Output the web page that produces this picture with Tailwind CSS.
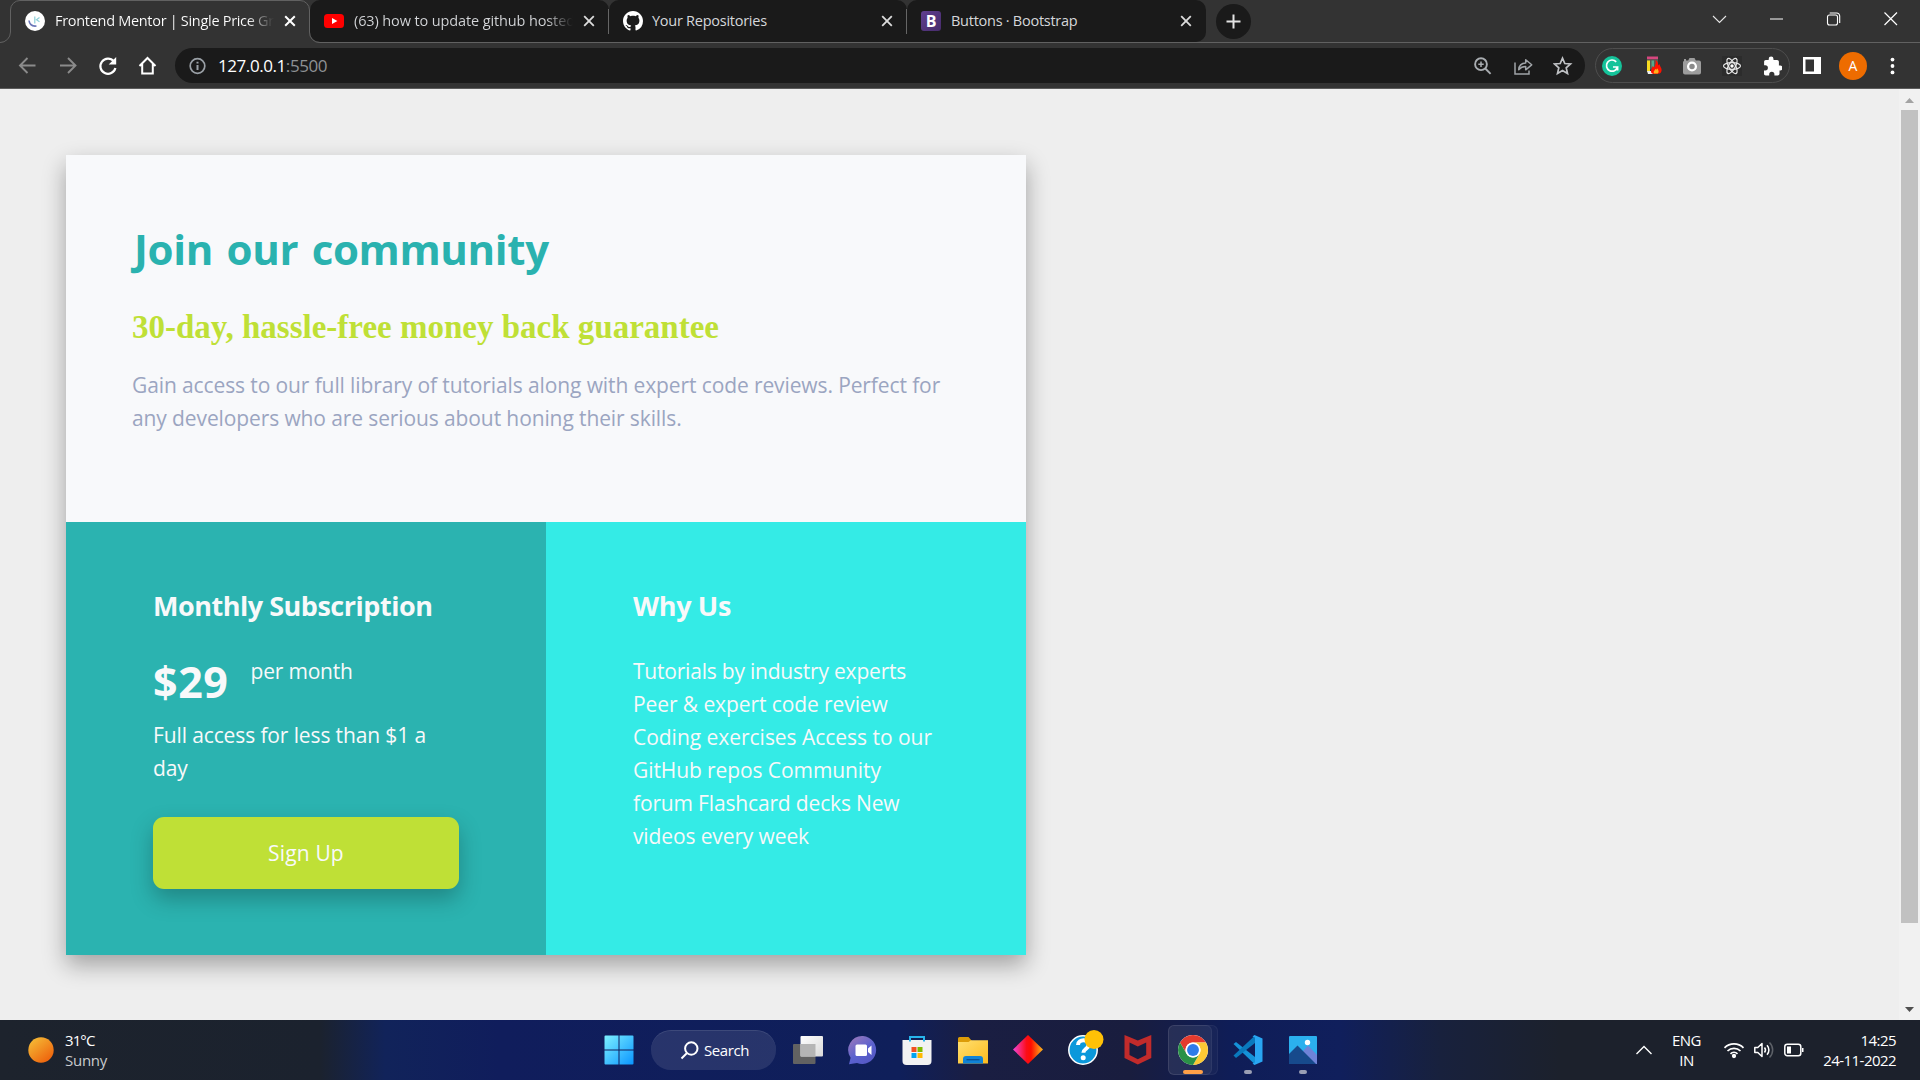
<!DOCTYPE html>
<html lang="en">
<head>
<meta charset="utf-8">
<title>Frontend Mentor | Single Price Grid Component</title>
<script src="https://cdn.jsdelivr.net/npm/@tailwindcss/browser@4"></script>
</head>
<body class="flex h-[1080px] w-[1920px] flex-col overflow-hidden bg-[#eeeeee] font-['Open_Sans',sans-serif]">

<!-- Tab strip -->
<header class="relative flex h-[43px] shrink-0 border-b border-[#616161] bg-[#333333] text-[14.5px] tracking-[-0.26px] text-[#d5d7da]">
  <div class="w-[310px] shrink-0"></div>
  <div class="flex h-[42px] w-[299px] shrink-0 items-center rounded-t-[10px] rounded-bl-[10px] bg-[#1a1a1a] pl-[14px]">
    <svg class="h-5 w-5 shrink-0" viewBox="0 0 20 20"><rect y="3" width="20" height="14" rx="3.5" fill="#f00"/><path d="M8 7l5.400 3L8 13z" fill="#fff"/></svg>
    <div class="ml-[10px] w-[219px] shrink-0 overflow-hidden whitespace-nowrap bg-linear-to-r from-[#d5d7da] from-88% to-[#1a1a1a] bg-clip-text tracking-[-0.12px] text-transparent">(63) how to update github hosted</div>
    <svg class="ml-[6px] h-5 w-5 shrink-0" viewBox="0 0 20 20" stroke="#dcdcdc" stroke-width="1.800"><path d="M5.200 5.200l9.600 9.600M14.800 5.200l-9.600 9.600"/></svg>
  </div>
  <div class="flex h-[42px] w-[298px] shrink-0 items-center rounded-t-[10px] bg-[#1a1a1a] pl-[14px]">
    <svg class="h-5 w-5 shrink-0" viewBox="0 0 16 16"><path fill="#fff" d="M8 0C3.58 0 0 3.58 0 8c0 3.54 2.29 6.53 5.47 7.59.4.07.55-.17.55-.38 0-.19-.01-.82-.01-1.49-2.01.37-2.53-.49-2.69-.94-.09-.23-.48-.94-.82-1.13-.28-.15-.68-.52-.01-.53.63-.01 1.08.58 1.23.82.72 1.21 1.87.87 2.33.66.07-.52.28-.87.51-1.07-1.78-.2-3.64-.89-3.64-3.95 0-.87.31-1.59.82-2.15-.08-.2-.36-1.02.08-2.12 0 0 .67-.21 2.2.82.64-.18 1.32-.27 2-.27s1.36.09 2 .27c1.53-1.04 2.2-.82 2.2-.82.44 1.1.16 1.92.08 2.12.51.56.82 1.27.82 2.15 0 3.07-1.87 3.75-3.65 3.95.29.25.54.73.54 1.48 0 1.07-.01 1.93-.01 2.2 0 .21.15.46.55.38A8.01 8.01 0 0016 8c0-4.42-3.58-8-8-8z"/></svg>
    <div class="ml-[9px] w-[225px]">Your Repositories</div>
    <svg class="h-5 w-5 shrink-0" viewBox="0 0 20 20" stroke="#dcdcdc" stroke-width="1.800"><path d="M5.200 5.200l9.600 9.600M14.800 5.200l-9.600 9.600"/></svg>
  </div>
  <div class="flex h-[42px] w-[299px] shrink-0 items-center rounded-t-[10px] rounded-br-[10px] bg-[#1a1a1a] pl-[14px]">
    <div class="flex h-5 w-5 shrink-0 items-center justify-center rounded-[3px] bg-linear-to-br from-[#5f3f8f] to-[#472c6b] text-[16px] font-bold text-white">B</div>
    <div class="ml-[10px] w-[225px]">Buttons · Bootstrap</div>
    <svg class="h-5 w-5 shrink-0" viewBox="0 0 20 20" stroke="#dcdcdc" stroke-width="1.800"><path d="M5.200 5.200l9.600 9.600M14.800 5.200l-9.600 9.600"/></svg>
  </div>
  <div class="ml-[10px] mt-1 flex h-[35px] w-[35px] items-center justify-center rounded-full bg-[#1a1a1a]">
    <svg class="h-[17px] w-[17px]" viewBox="0 0 17 17" stroke="#e4e4e4" stroke-width="2"><path d="M8.500 1.500v14M1.500 8.500h14"/></svg>
  </div>
  <div class="ml-auto flex h-[37px] items-center pr-px">
    <svg class="w-[57px]" height="20" viewBox="0 0 57 20" fill="none" stroke="#e6e6e6" stroke-width="1.100"><path d="M22 7l6.500 6.500L35 7"/></svg>
    <svg class="w-[57px]" height="20" viewBox="0 0 57 20" fill="none" stroke="#fff" stroke-width="1"><path d="M22 10h13"/></svg>
    <svg class="w-[57px]" height="20" viewBox="0 0 57 20" fill="none" stroke="#fff" stroke-width="1.100"><rect x="22.500" y="6" width="10" height="10" rx="2"/><path d="M24.700 4h7a3 3 0 0 1 3 3v7"/></svg>
    <svg class="w-[57px]" height="20" viewBox="0 0 57 20" fill="none" stroke="#fff" stroke-width="1.200"><path d="M22.500 3.500l12.500 12.500M35 3.500L22.500 16"/></svg>
  </div>
  <!-- active tab, laid over the strip's bottom line -->
  <div class="absolute left-0 top-0 h-[43px] w-[320px]">
    <svg class="absolute inset-0" width="320" height="43" viewBox="0 0 320 43"><path d="M0 43V42.500A10 10 0 0 0 10.500 32.500V10A9.500 9.500 0 0 1 20 .5H300A9.500 9.500 0 0 1 309.500 10V32.500A10 10 0 0 0 319.500 42.500V43z" fill="#333"/><path d="M0 42.500A10.500 10.500 0 0 0 10.500 32V10A9.500 9.500 0 0 1 20 .5H300A9.500 9.500 0 0 1 309.500 10V32A10 10 0 0 0 320 42.500" fill="none" stroke="#616161"/></svg>
    <div class="relative flex h-[42px] items-center pl-[25px] text-white">
      <svg class="h-6 w-5 shrink-0" viewBox="0 0 20 24"><circle cx="10" cy="12" r="10" fill="#fff"/><path d="M4 11.500c.5 4 3.500 6 7.500 5.500" fill="none" stroke="#6a76b8" stroke-width="1.600"/><path d="M9.800 7.500v7M14.500 8.500l-3 2.200 3 2" fill="none" stroke="#8fd0d8" stroke-width="1.200"/></svg>
      <div class="ml-[10px] w-[219px] overflow-hidden whitespace-nowrap bg-linear-to-r from-white from-88% to-[#333333] bg-clip-text tracking-[-0.3px] text-transparent">Frontend Mentor | Single Price Grid</div>
      <svg class="ml-[6px] h-5 w-5 shrink-0" viewBox="0 0 20 20" stroke="#fff" stroke-width="2"><path d="M5.200 5.200l9.600 9.600M14.800 5.200l-9.600 9.600"/></svg>
    </div>
  </div>
  <div class="absolute left-[608px] top-[9px] h-[25px] w-px bg-[#666]"></div>
  <div class="absolute left-[906px] top-[9px] h-[25px] w-px bg-[#666]"></div>
</header>

<!-- Toolbar -->
<nav class="flex h-[46px] shrink-0 items-center border-b border-[#5c5c5c] bg-[#333333]">
  <svg class="ml-[18px] h-5 w-5" viewBox="0 0 20 20" fill="none" stroke="#8b8b8b" stroke-width="1.900"><path d="M17.500 9.500H2.500M9.500 2L2 9.500l7.500 7.500"/></svg>
  <svg class="ml-5 h-5 w-5" viewBox="0 0 20 20" fill="none" stroke="#8b8b8b" stroke-width="1.900"><path d="M2 9.500h15M10 2l7.500 7.500-7.500 7.500"/></svg>
  <svg class="ml-[20px] h-5 w-5" viewBox="0 0 20 20" fill="none" stroke="#fff" stroke-width="2.200"><path d="M15.800 5.300A7.600 7.600 0 1 0 17.400 12"/><path d="M18.200 1v7.500h-7.500z" fill="#fff" stroke="none"/></svg>
  <svg class="ml-[19px] h-5 w-5" viewBox="0 0 20 20" fill="none" stroke="#fff" stroke-width="2"><path d="M2.500 10L10.500 2l8 8M5.200 8v9.500h10.600V8"/></svg>
  <div class="ml-[18px] flex h-[35px] w-[1410px] items-center rounded-full bg-[#1a1a1a] pl-3">
    <svg class="h-5 w-5" viewBox="0 0 20 20" fill="none" stroke="#9aa0a6" stroke-width="1.700"><circle cx="10.500" cy="10" r="7.300"/><path d="M10.500 9v5M10.500 5.800v1.800" stroke-width="2"/></svg>
    <div class="ml-[11px] text-[17px] tracking-[-0.43px] text-white">127.0.0.1<span class="text-[#8e9194]">:5500</span></div>
    <div class="ml-auto flex items-center gap-5 pr-3">
      <svg class="h-5 w-5" viewBox="0 0 20 20" fill="none" stroke="#a9adb1" stroke-width="1.900"><circle cx="8" cy="8.200" r="5.900"/><path d="M12.300 12.500l5.300 5.300"/><path d="M5.300 8.200h5.400M8 5.500v5.400" stroke-width="1.500"/></svg>
      <svg class="h-5 w-5" viewBox="0 0 20 20" fill="none" stroke="#a0a4a8" stroke-width="1.500"><path d="M2 6.500v11.500h14V14.500"/><path d="M5.700 13.700C6 9.500 8.700 7.200 12.700 7V3.700L18.700 8.800l-6 5v-3.200c-3 0-5.200.9-7 3.100z" stroke-linejoin="round"/></svg>
      <svg class="h-5 w-5" viewBox="0 0 20 20" fill="none" stroke="#bfc1c4" stroke-width="1.700"><path d="M9.500 2.200l2.300 5.300 5.700.5-4.300 3.800 1.300 5.600-5-3-5 3 1.300-5.600L1.500 8l5.700-.5z"/></svg>
    </div>
  </div>
  <div class="ml-[10px] flex h-[35px] w-[195px] items-center gap-[20px] rounded-full border border-[#4e4e4e] pl-[6px]">
    <svg class="h-5 w-5 shrink-0" viewBox="0 0 20 20"><circle cx="10" cy="10" r="10" fill="#15c39a"/><path d="M14.200 5.800A5.600 5.600 0 1 0 15.500 11H11M15.600 10.400V14.500" fill="none" stroke="#fff" stroke-width="1.700"/></svg>
    <svg class="h-5 w-5 shrink-0" viewBox="0 0 20 20"><path d="M5 .5h11V3.500H5z" fill="#d6477f"/><path d="M5 3.500h11v10H5z" fill="#555b50"/><path d="M5 4.500h3v11H5z" fill="#f9dc20"/><path d="M9.500 4.500h2.500v7H9.500z" fill="#58a78b"/><path d="M5 15h7v3H6z" fill="#eee"/><path d="M9.500 17c-1.500-3 1-4.500 1-7l2 1.500C13 8.500 14.500 7 13.500 4c3 2 2.500 4 3 5.500l1-1.500c.5 3 2.500 4 2 7-.4 2.400-2.500 3-5 3-2 0-4 .3-5-1z" fill="#ff1100"/><path d="M12 17.500c-1-2.500 1-3 1.200-4.500l1.300.8.500-1.600c1.500 1.600 2.500 3.800.8 5.300z" fill="#ffb31a"/></svg>
    <svg class="h-5 w-5 shrink-0" viewBox="0 0 20 20"><path d="M2 5V3h2v1.500h2.200L7.500 2h5l1.300 2.500H17A2 2 0 0 1 19 6.500v10a2 2 0 0 1-2 2H3a2 2 0 0 1-2-2v-10C1 5.700 1.300 5.300 2 5z" fill="#9d9d9d"/><circle cx="10" cy="10.500" r="3.900" fill="#8a8a8a" stroke="#fff" stroke-width="2.300"/></svg>
    <svg class="h-5 w-5 shrink-0" viewBox="0 0 20 20"><path d="M0 0h20v20H0z" fill="#2c2c2c"/><g fill="none" stroke="#e8e8e8" stroke-width="1.200"><ellipse cx="10" cy="10" rx="8.500" ry="3.300"/><ellipse cx="10" cy="10" rx="8.500" ry="3.300" transform="rotate(60 10 10)"/><ellipse cx="10" cy="10" rx="8.500" ry="3.300" transform="rotate(120 10 10)"/></g><circle cx="10" cy="10" r="1.700" fill="#fff"/></svg>
    <svg class="h-5 w-5 shrink-0" viewBox="0 0 20 20"><path d="M18.200 9.600h-1.300V5.900c0-1-.8-1.800-1.800-1.800h-3.600V2.900a2.400 2.400 0 0 0-4.800 0v1.200H3.800c-1 0-1.700.8-1.700 1.800v3.300h1.200a2.600 2.600 0 0 1 0 5.200H2v3.400c0 1 .8 1.700 1.800 1.700h3.400v-1.200a2.600 2.600 0 0 1 5.200 0v1.200h3.300c1 0 1.800-.8 1.800-1.700v-3.400h.7a2.400 2.400 0 0 0 0-4.800z" fill="#fff"/></svg>
  </div>
  <svg class="ml-3 h-5 w-5" viewBox="0 0 20 20"><path d="M1 1h18v17H1zM3.500 3.500v12H12v-12z" fill="#fff" fill-rule="evenodd"/></svg>
  <div class="ml-[17px] flex h-7 w-7 items-center justify-center rounded-full bg-[#ee6c00] text-[14px] text-white">A</div>
  <svg class="ml-[15px] h-5 w-5" viewBox="0 0 20 20" fill="#fff"><circle cx="10.500" cy="3.600" r="1.900"/><circle cx="10.500" cy="10" r="1.900"/><circle cx="10.500" cy="16.400" r="1.900"/></svg>
</nav>

<!-- Page -->
<main class="flex h-[931px] shrink-0 justify-between">
  <div class="p-[66px]">
    <article class="w-[960px] text-[21px] leading-[33px] text-[#f8f9fa] shadow-[0_10px_22px_0_rgba(0,0,0,0.32)]">
      <section class="h-[367px] bg-[#f8f9fb] px-[66px] pt-[67px]">
        <h1 class="pl-[2px] text-[42px] leading-[53px] font-bold tracking-[-0.35px] [word-spacing:3px] text-[#2ab2af]">Join our community</h1>
        <h2 class="mt-[32px] font-['Liberation_Serif',serif] text-[33px] leading-[40px] font-bold text-[#bfe036]">30-day, hassle-free money back guarantee</h2>
        <p class="mt-[22px] whitespace-nowrap tracking-[-0.11px] text-[#9ba5c1]">Gain access to our full library of tutorials along with expert code reviews. Perfect for<br>any developers who are serious about honing their skills.</p>
      </section>
      <div class="grid h-[433px] grid-cols-2">
        <section class="bg-[#2bb3b0] px-[87px] pt-[66px]">
          <h3 class="text-[27px] leading-[36px] font-bold tracking-[-0.48px]">Monthly Subscription</h3>
          <div class="mt-[31px] flex h-[53px] gap-[22px]">
            <strong class="text-[43px] leading-[53px] tracking-[0.6px]">$29</strong>
            <span class="tracking-[-0.2px]">per month</span>
          </div>
          <p class="mt-[11px] whitespace-nowrap tracking-[-0.12px]">Full access for less than $1 a<br>day</p>
          <button class="mt-[32px] flex h-[72px] w-[306px] items-center justify-center rounded-[11px] bg-[#bfe036] tracking-[0.15px] shadow-[0_10px_22px_0_rgba(0,0,0,0.25)]">Sign Up</button>
        </section>
        <section class="bg-[#34ebe6] px-[87px] pt-[66px]">
          <h3 class="text-[27px] leading-[36px] font-bold tracking-[-0.35px]">Why Us</h3>
          <p class="mt-[31px] whitespace-nowrap tracking-[-0.09px]"><span class="tracking-[-0.21px]">Tutorials by industry experts</span><br>Peer &amp; expert code review<br><span class="tracking-[-0.03px]">Coding exercises Access to our</span><br><span>GitHub repos Community</span><br><span class="tracking-[-0.16px]">forum Flashcard decks New</span><br><span class="tracking-[-0.12px]">videos every week</span></p>
        </section>
      </div>
    </article>
  </div>
  <!-- scrollbar -->
  <div class="flex w-[21px] flex-col items-center bg-[#f1f1f1]">
    <svg class="h-[21px] w-[21px] shrink-0" viewBox="0 0 21 21"><path d="M6 14l4.500-5 4.500 5z" fill="#a3a3a3"/></svg>
    <div class="h-[813px] w-[17px] bg-[#c1c1c1]"></div>
    <svg class="mt-auto h-[21px] w-[21px] shrink-0" viewBox="0 0 21 21"><path d="M6 8l4.500 5L15 8z" fill="#505050"/></svg>
  </div>
</main>

<!-- Taskbar -->
<footer class="flex h-[60px] shrink-0 items-center bg-[linear-gradient(90deg,#1d232d_0,#1b222e_320px,#11235a_385px,#101d5c_500px,#0f1f5a_900px,#1a1e42_975px,#191d3e_1130px,#0f1d57_1230px,#101f5c_1340px,#18213d_1440px,#1c212c_1560px)] text-[15px] leading-5 text-white">
  <svg class="ml-7 h-[26px] w-[26px]" viewBox="0 0 26 26"><defs><linearGradient id="sun" x1="0" y1="0" x2=".8" y2="1"><stop stop-color="#f5c43a"/><stop offset="1" stop-color="#ee5f0b"/></linearGradient></defs><circle cx="13" cy="13" r="12.700" fill="url(#sun)"/></svg>
  <div class="ml-[11px] w-[525px] pb-px"><div class="tracking-[-0.9px]">31°C</div><div class="tracking-[-0.26px] text-[#c9cbce]">Sunny</div></div>
  <div class="flex h-full items-center">
    <svg class="ml-[14px] h-[30px] w-[30px]" viewBox="0 0 30 30"><defs><linearGradient id="win" x1="0" y1="0" x2="1" y2="1" ><stop stop-color="#7df0ff"/><stop offset="1" stop-color="#0a95ff"/></linearGradient></defs><path d="M.5 1.500a1 1 0 0 1 1-1h13v14H.5zM15.500.5h13a1 1 0 0 1 1 1v13h-14zM.5 15.500h14v14h-13a1 1 0 0 1-1-1zM15.500 15.500h14v13a1 1 0 0 1-1 1h-13z" fill="url(#win)"/></svg>
    <div class="ml-[17px] flex h-10 w-[125px] items-center rounded-full border-t border-white/10 bg-white/10 pl-[29px]">
      <svg class="h-[19px] w-[19px]" viewBox="0 0 19 19" fill="none" stroke="#fff" stroke-width="2"><circle cx="11.300" cy="7.500" r="6.200"/><path d="M7 12l-5.500 5.500"/></svg>
      <span class="ml-[5px] pb-[2px] tracking-[-0.4px]">Search</span>
    </div>
    <svg class="ml-[16px] h-[32px] w-[32px]" viewBox="0 0 32 32"><defs><linearGradient id="tv" x1="0" y1="0" x2="1" y2="1"><stop stop-color="#fff"/><stop offset="1" stop-color="#d9d9d9"/></linearGradient></defs><rect x="1" y="10" width="22.500" height="20" rx="1" fill="#626262"/><rect x="8.500" y="2" width="22.500" height="20.500" rx="1" fill="url(#tv)"/><path d="M8.500 10h15v12.500h-15z" fill="#b5b5b5"/></svg>
    <svg class="ml-[23px] h-[32px] w-[32px]" viewBox="0 0 32 32"><defs><linearGradient id="chat" x1="0" y1="0" x2=".7" y2="1"><stop stop-color="#a27bb8"/><stop offset=".6" stop-color="#5b62cf"/><stop offset="1" stop-color="#5558c4"/></linearGradient></defs><path d="M16 2a14 14 0 1 1-6 27l-8 1.200 1.600-6.500A14 14 0 0 1 16 2z" fill="url(#chat)"/><rect x="8.500" y="10.500" width="11.500" height="11.500" rx="1.500" fill="#fff"/><path d="M21 14.500l3.500-3v9.500L21 18z" fill="#fff"/></svg>
    <svg class="ml-[22px] h-[32px] w-[32px]" viewBox="0 0 32 32"><path d="M9 8V3h14v5" fill="none" stroke="#27b4ec" stroke-width="2"/><path d="M1.500 6h29v21a4 4 0 0 1-4 4h-21a4 4 0 0 1-4-4z" fill="#f2f2f2"/><path d="M9 6v1.500M23 6v1.500" stroke="#27b4ec" stroke-width="2"/><path d="M10.500 13h5v5h-5z" fill="#f25022"/><path d="M16.500 13h5v5h-5z" fill="#7fba00"/><path d="M10.500 19h5v5h-5z" fill="#00a4ef"/><path d="M16.500 19h5v5h-5z" fill="#ffb900"/></svg>
    <svg class="ml-[24px] h-[32px] w-[32px]" viewBox="0 0 32 32"><defs><linearGradient id="fold" x1="0" y1="0" x2="1" y2="1"><stop stop-color="#ffdf70"/><stop offset="1" stop-color="#fdbb1e"/></linearGradient></defs><path d="M1 4.500a1.500 1.500 0 0 1 1.500-1.500h9l3 3.500v4H1z" fill="#dc9c08"/><path d="M1 8h10.500l2.500-1.800h17V29.500H1z" fill="url(#fold)"/><path d="M6 29.500V25a3 3 0 0 1 3-3h14a3 3 0 0 1 3 3v4.500z" fill="#1083d6"/><path d="M9.500 25.700h13" stroke="#0a4f93" stroke-width="1.300"/></svg>
    <svg class="ml-[23px] h-[32px] w-[32px]" viewBox="0 0 32 32"><defs><linearGradient id="dia"><stop offset=".05" stop-color="#f23fc6"/><stop offset=".45" stop-color="#fb0d18"/><stop offset=".6" stop-color="#ff0d00"/><stop offset=".95" stop-color="#f9a51b"/></linearGradient></defs><path d="M16 1L31 15.500 16 30 1 15.500z" fill="url(#dia)"/></svg>
    <svg class="ml-[23px] h-[40px] w-[38px]" viewBox="0 0 38 40"><circle cx="16" cy="20" r="14.200" fill="#0b98db" stroke="#fff" stroke-width="1.500"/><path d="M11 15c.3-6.500 11-6.200 10.700-.2-.2 4-5.300 4-5.300 8" fill="none" stroke="#fff" stroke-width="4"/><circle cx="16.200" cy="27.700" r="2.500" fill="#fff"/><circle cx="27" cy="9.500" r="9.500" fill="#ffc107"/></svg>
    <svg class="ml-[17px] h-[32px] w-[32px]" viewBox="0 0 32 32"><path d="M2.500 1l13.300 5.500L29.300 1V24L15.800 30.500 2.500 24zM7.500 8.500v12.500l8.300 4.200 8.400-4.200V8.500l-8.400 4z" fill="#c22b2b" fill-rule="evenodd"/></svg>
    <div class="relative ml-[14px] h-[50px] w-[50px]">
      <div class="absolute inset-y-0 left-0 w-[50px] rounded-md border border-white/5 bg-white/3"></div>
      <div class="absolute inset-y-0 left-0 w-[44px] rounded-md border border-white/5 bg-white/5"></div>
      <svg class="absolute left-[10px] top-[10px] h-[30px] w-[30px]" viewBox="0 0 48 48"><circle cx="24" cy="24" r="24" fill="#fff"/><path d="M3.220 12A24 24 0 0 1 44.780 12H24A12 12 0 0 0 13.600 30z" fill="#e33b2e"/><path d="M44.780 12A24 24 0 0 1 24 48L34.400 30A12 12 0 0 0 24 12z" fill="#fcc934"/><path d="M24 48A24 24 0 0 1 3.220 12L13.600 30A12 12 0 0 0 34.400 30z" fill="#2a9147"/><circle cx="24" cy="24" r="12" fill="#fff"/><circle cx="24" cy="24" r="9.500" fill="#2f7bea"/></svg>
      <div class="absolute bottom-[1px] left-[15px] h-1 w-5 rounded-full bg-[#ffa048]"></div>
    </div>
    <div class="relative ml-[14px] h-[50px] w-[32px]">
      <svg class="absolute left-0 top-[9px] h-[32px] w-[32px]" viewBox="0 0 32 32"><path d="M1.500 10L4 8l19 15v7.500z" fill="#1592d8"/><path d="M1.500 21.500L4 24 23 9V1.500z" fill="#0a79bd"/><path d="M22.500 1l8 3.500v23l-8 3.500-2-1.500 2.500-1V3.500l-2.500-1z" fill="#29a6f2"/></svg>
      <div class="absolute bottom-[1px] left-3 h-1 w-2 rounded-full bg-[#9a9fb4]"></div>
    </div>
    <div class="relative ml-[23px] h-[50px] w-[32px]">
      <svg class="absolute left-0 top-[9px] h-[32px] w-[32px]" viewBox="0 0 32 32"><rect x="2" y="2" width="28" height="28" rx="1" fill="#2bb0ee"/><path d="M16 17l5-5.500 9 9.500v9H20z" fill="#6f83d8"/><path d="M2 20l8.500-8.500L29 30H2z" fill="#174a8c"/><circle cx="20.500" cy="8.500" r="2.700" fill="#fff"/></svg>
      <div class="absolute bottom-[1px] left-3 h-1 w-2 rounded-full bg-[#9a9fb4]"></div>
    </div>
  </div>
  <div class="ml-auto flex items-center pb-px pr-6">
    <svg class="h-5 w-5" viewBox="0 0 20 20" fill="none" stroke="#fff" stroke-width="1.400"><path d="M2.500 14l7.500-7.500 7.500 7.500"/></svg>
    <div class="ml-[16px] w-[33px] text-center tracking-[-0.5px]"><div>ENG</div><div>IN</div></div>
    <svg class="ml-[20px] h-[22px] w-[22px]" viewBox="0 0 22 22" fill="none" stroke="#fff" stroke-width="1.700"><path d="M1.500 8.800a13.500 13.500 0 0 1 19 0M4.500 12a9.200 9.200 0 0 1 13 0M7.500 14.800a5 5 0 0 1 7 0"/><circle cx="11" cy="17" r="1.300" fill="#fff"/></svg>
    <svg class="ml-[8px] h-[22px] w-[22px]" viewBox="0 0 22 22" fill="none" stroke="#fff" stroke-width="1.500"><path d="M1.800 8.500h3L9 4.500v13l-4.200-4h-3z" stroke-linejoin="round"/><path d="M11.500 8.500a4 4 0 0 1 0 5M14 6.200a7 7 0 0 1 0 9.600"/><path d="M16.500 3.500a10.500 10.500 0 0 1 0 15" stroke="#5d6168"/></svg>
    <svg class="ml-[8px] h-[22px] w-[22px]" viewBox="0 0 22 22" fill="none" stroke="#fff" stroke-width="1.500"><rect x="1.800" y="5.300" width="16" height="11.500" rx="2.500"/><path d="M4 7.500h4v7H4zM19 9h1.500v4H19z" fill="#fff" stroke="none"/></svg>
    <div class="ml-[15px] w-[76px] text-right tracking-[-0.55px]"><div>14:25</div><div>24-11-2022</div></div>
  </div>
</footer>
</body>
</html>
